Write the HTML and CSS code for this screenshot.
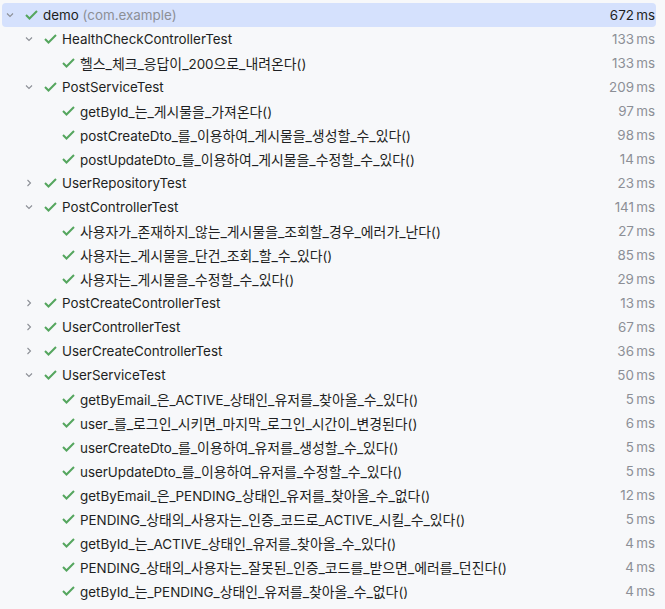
FILE: index.html
```html
<!DOCTYPE html>
<html lang="ko">
<head>
<meta charset="utf-8">
<link rel="stylesheet" href="styles.css">
</head>
<body>
<div class="tree">
  <div class="row sel l0"><span class="chev"><svg viewBox="0 0 8 8"><path d="M1 2.5 L4 5.5 L7 2.5"/></svg></span><span class="ok"><svg viewBox="0 0 13 10"><path d="M1 5 L4.5 8.5 L12 1"/></svg></span><span class="name">demo <span class="pkg">(com.example)</span></span><span class="dur"><b>672</b> ms</span></div>
  <div class="row l1"><span class="chev"><svg viewBox="0 0 8 8"><path d="M1 2.5 L4 5.5 L7 2.5"/></svg></span><span class="ok"><svg viewBox="0 0 13 10"><path d="M1 5 L4.5 8.5 L12 1"/></svg></span><span class="name">HealthCheckControllerTest</span><span class="dur">133 ms</span></div>
  <div class="row l2"><span class="ok"><svg viewBox="0 0 13 10"><path d="M1 5 L4.5 8.5 L12 1"/></svg></span><span class="name"><span class="ko">헬스_체크_응답이_</span>200<span class="ko">으로_내려온다</span>()</span><span class="dur">133 ms</span></div>
  <div class="row l1"><span class="chev"><svg viewBox="0 0 8 8"><path d="M1 2.5 L4 5.5 L7 2.5"/></svg></span><span class="ok"><svg viewBox="0 0 13 10"><path d="M1 5 L4.5 8.5 L12 1"/></svg></span><span class="name">PostServiceTest</span><span class="dur">209 ms</span></div>
  <div class="row l2"><span class="ok"><svg viewBox="0 0 13 10"><path d="M1 5 L4.5 8.5 L12 1"/></svg></span><span class="name">getById_<span class="ko">는_게시물을_가져온다</span>()</span><span class="dur">97 ms</span></div>
  <div class="row l2"><span class="ok"><svg viewBox="0 0 13 10"><path d="M1 5 L4.5 8.5 L12 1"/></svg></span><span class="name">postCreateDto_<span class="ko">를_이용하여_게시물을_생성할_수_있다</span>()</span><span class="dur">98 ms</span></div>
  <div class="row l2"><span class="ok"><svg viewBox="0 0 13 10"><path d="M1 5 L4.5 8.5 L12 1"/></svg></span><span class="name">postUpdateDto_<span class="ko">를_이용하여_게시물을_수정할_수_있다</span>()</span><span class="dur">14 ms</span></div>
  <div class="row l1"><span class="chev"><svg viewBox="0 0 8 8"><path d="M2.5 1 L5.5 4 L2.5 7"/></svg></span><span class="ok"><svg viewBox="0 0 13 10"><path d="M1 5 L4.5 8.5 L12 1"/></svg></span><span class="name">UserRepositoryTest</span><span class="dur">23 ms</span></div>
  <div class="row l1"><span class="chev"><svg viewBox="0 0 8 8"><path d="M1 2.5 L4 5.5 L7 2.5"/></svg></span><span class="ok"><svg viewBox="0 0 13 10"><path d="M1 5 L4.5 8.5 L12 1"/></svg></span><span class="name">PostControllerTest</span><span class="dur">141 ms</span></div>
  <div class="row l2"><span class="ok"><svg viewBox="0 0 13 10"><path d="M1 5 L4.5 8.5 L12 1"/></svg></span><span class="name"><span class="ko">사용자가_존재하지_않는_게시물을_조회할_경우_에러가_난다</span>()</span><span class="dur">27 ms</span></div>
  <div class="row l2"><span class="ok"><svg viewBox="0 0 13 10"><path d="M1 5 L4.5 8.5 L12 1"/></svg></span><span class="name"><span class="ko">사용자는_게시물을_단건_조회_할_수_있다</span>()</span><span class="dur">85 ms</span></div>
  <div class="row l2"><span class="ok"><svg viewBox="0 0 13 10"><path d="M1 5 L4.5 8.5 L12 1"/></svg></span><span class="name"><span class="ko">사용자는_게시물을_수정할_수_있다</span>()</span><span class="dur">29 ms</span></div>
  <div class="row l1"><span class="chev"><svg viewBox="0 0 8 8"><path d="M2.5 1 L5.5 4 L2.5 7"/></svg></span><span class="ok"><svg viewBox="0 0 13 10"><path d="M1 5 L4.5 8.5 L12 1"/></svg></span><span class="name">PostCreateControllerTest</span><span class="dur">13 ms</span></div>
  <div class="row l1"><span class="chev"><svg viewBox="0 0 8 8"><path d="M2.5 1 L5.5 4 L2.5 7"/></svg></span><span class="ok"><svg viewBox="0 0 13 10"><path d="M1 5 L4.5 8.5 L12 1"/></svg></span><span class="name">UserControllerTest</span><span class="dur">67 ms</span></div>
  <div class="row l1"><span class="chev"><svg viewBox="0 0 8 8"><path d="M2.5 1 L5.5 4 L2.5 7"/></svg></span><span class="ok"><svg viewBox="0 0 13 10"><path d="M1 5 L4.5 8.5 L12 1"/></svg></span><span class="name">UserCreateControllerTest</span><span class="dur">36 ms</span></div>
  <div class="row l1"><span class="chev"><svg viewBox="0 0 8 8"><path d="M1 2.5 L4 5.5 L7 2.5"/></svg></span><span class="ok"><svg viewBox="0 0 13 10"><path d="M1 5 L4.5 8.5 L12 1"/></svg></span><span class="name">UserServiceTest</span><span class="dur">50 ms</span></div>
  <div class="row l2"><span class="ok"><svg viewBox="0 0 13 10"><path d="M1 5 L4.5 8.5 L12 1"/></svg></span><span class="name">getByEmail_<span class="ko">은</span>_ACTIVE_<span class="ko">상태인_유저를_찾아올_수_있다</span>()</span><span class="dur">5 ms</span></div>
  <div class="row l2"><span class="ok"><svg viewBox="0 0 13 10"><path d="M1 5 L4.5 8.5 L12 1"/></svg></span><span class="name">user_<span class="ko">를_로그인_시키면_마지막_로그인_시간이_변경된다</span>()</span><span class="dur">6 ms</span></div>
  <div class="row l2"><span class="ok"><svg viewBox="0 0 13 10"><path d="M1 5 L4.5 8.5 L12 1"/></svg></span><span class="name">userCreateDto_<span class="ko">를_이용하여_유저를_생성할_수_있다</span>()</span><span class="dur">5 ms</span></div>
  <div class="row l2"><span class="ok"><svg viewBox="0 0 13 10"><path d="M1 5 L4.5 8.5 L12 1"/></svg></span><span class="name">userUpdateDto_<span class="ko">를_이용하여_유저를_수정할_수_있다</span>()</span><span class="dur">5 ms</span></div>
  <div class="row l2"><span class="ok"><svg viewBox="0 0 13 10"><path d="M1 5 L4.5 8.5 L12 1"/></svg></span><span class="name">getByEmail_<span class="ko">은</span>_PENDING_<span class="ko">상태인_유저를_찾아올_수_없다</span>()</span><span class="dur">12 ms</span></div>
  <div class="row l2"><span class="ok"><svg viewBox="0 0 13 10"><path d="M1 5 L4.5 8.5 L12 1"/></svg></span><span class="name">PENDING_<span class="ko">상태의_사용자는_인증_코드로</span>_ACTIVE_<span class="ko">시킬_수_있다</span>()</span><span class="dur">5 ms</span></div>
  <div class="row l2"><span class="ok"><svg viewBox="0 0 13 10"><path d="M1 5 L4.5 8.5 L12 1"/></svg></span><span class="name">getById_<span class="ko">는</span>_ACTIVE_<span class="ko">상태인_유저를_찾아올_수_있다</span>()</span><span class="dur">4 ms</span></div>
  <div class="row l2"><span class="ok"><svg viewBox="0 0 13 10"><path d="M1 5 L4.5 8.5 L12 1"/></svg></span><span class="name">PENDING_<span class="ko">상태의_사용자는_잘못된_인증_코드를_받으면_에러를_던진다</span>()</span><span class="dur">4 ms</span></div>
  <div class="row l2"><span class="ok"><svg viewBox="0 0 13 10"><path d="M1 5 L4.5 8.5 L12 1"/></svg></span><span class="name">getById_<span class="ko">는</span>_PENDING_<span class="ko">상태인_유저를_찾아올_수_없다</span>()</span><span class="dur">4 ms</span></div>
</div>
</body>
</html>
```

FILE: styles.css
```css
html, body {
  margin: 0;
  padding: 0;
  background: #f7f8fa;
}
body {
  font-family: Inter, "Noto Sans CJK KR", sans-serif;
  font-size: 13.4px;
  color: #1e1f22;
}
.tree {
  padding: 3px 9px 0 2px;
  display: flex;
  flex-direction: column;
}
.row {
  height: 24px;
  display: flex;
  align-items: center;
  border-radius: 4px;
  white-space: nowrap;
}
.row.sel {
  background: #d5e1fd;
}
.l0 { padding-left: 4px; }
.l1 { padding-left: 23px; }
.l2 { padding-left: 60px; }
.chev {
  width: 8px;
  height: 8px;
  margin-right: 11px;
  display: flex;
}
.chev svg {
  width: 8px;
  height: 8px;
  fill: none;
  stroke: #8c8f96;
  stroke-width: 1.1;
}
.ok {
  width: 13px;
  height: 10px;
  margin-right: 5px;
  display: flex;
}
.ok svg {
  width: 13px;
  height: 10px;
  fill: none;
  stroke: #55a65e;
  stroke-width: 2;
}
.name {
  flex: 1;
}
.ko {
  font-size: 13.9px;
}
.pkg {
  color: #8c8f96;
}
.dur {
  color: #8c8f96;
  padding-right: 1px;
  word-spacing: -1.5px;
}
.dur b {
  font-weight: normal;
  color: #1e1f22;
}
.sel .dur {
  color: #1e1f22;
}
```
